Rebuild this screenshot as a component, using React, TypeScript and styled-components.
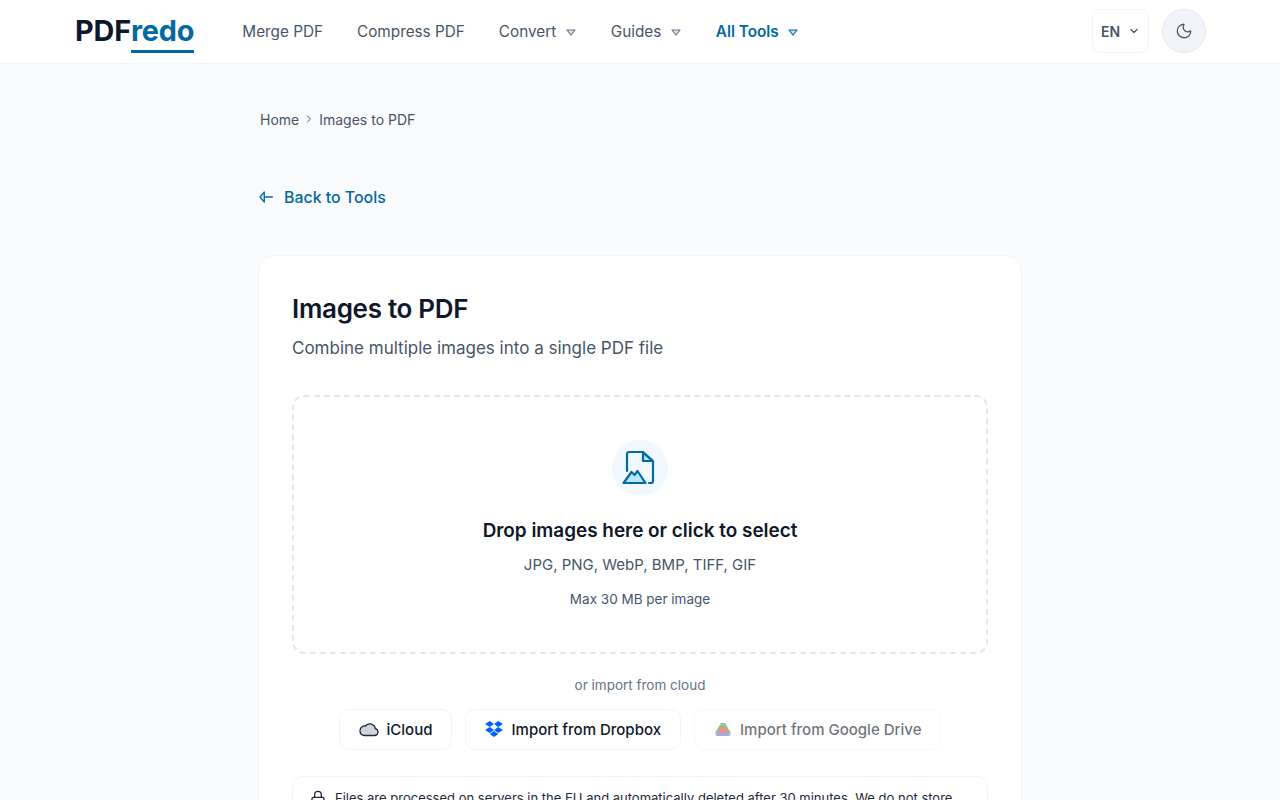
import React from "react";
import styled, { createGlobalStyle } from "styled-components";
import { ChevronDown, ChevronRight, Lock, Moon } from "lucide-react";

const GlobalStyle = createGlobalStyle`
  html, body {
    margin: 0;
    padding: 0;
    background: #fafbfd;
    font-family: Inter, "Liberation Sans", sans-serif;
    color: #0f172a;
  }
  * { box-sizing: border-box; }
  ::-webkit-scrollbar { display: none; }
`;

const Header = styled.header`
  height: 64px;
  background: #fff;
  border-bottom: 1px solid #f1f5f9;
  display: flex;
  align-items: center;
  padding: 0 74px 1px 75px;
`;

const Logo = styled.a`
  display: flex;
  font-size: 28.8px;
  font-weight: 700;
  line-height: 34px;
  letter-spacing: -0.15px;
  color: #0f172a;
  margin-right: 48px;
`;

const LogoAccent = styled.span`
  color: #0369a1;
  border-bottom: 3px solid #0369a1;
  height: 39px;
  margin-bottom: -5px;
  line-height: 34px;
`;

const Nav = styled.nav`
  display: flex;
  align-items: center;
  gap: 34px;
  flex: 1;
`;

const NavItem = styled.a<{ $active?: boolean }>`
  display: flex;
  align-items: center;
  gap: 8.5px;
  font-size: 15.3px;
  font-weight: ${(p) => (p.$active ? 600 : 400)};
  color: ${(p) => (p.$active ? "#0369a1" : "#475569")};
`;

const Caret = styled.svg<{ $active?: boolean }>`
  width: 12px;
  height: 7px;
  margin-top: 3px;
  fill: ${(p) => (p.$active ? "#bae6fd" : "#e2e8f0")};
  stroke: ${(p) => (p.$active ? "#0369a1" : "#64748b")};
  stroke-width: 1.2;
  stroke-linejoin: round;
`;

const Actions = styled.div`
  display: flex;
  align-items: center;
  gap: 13px;
`;

const LangButton = styled.button`
  width: 57px;
  height: 44px;
  display: flex;
  align-items: center;
  justify-content: center;
  gap: 8px;
  background: #fff;
  border: 1px solid #f1f5f9;
  border-radius: 8px;
  font: 600 14px Inter, sans-serif;
  color: #475569;
  padding: 0;
`;

const ThemeButton = styled.button`
  width: 44px;
  height: 44px;
  display: flex;
  align-items: center;
  justify-content: center;
  border-radius: 50%;
  border: 1px solid #e2e8f0;
  background: #f1f5f9;
  color: #475569;
  padding: 0;
`;

const Main = styled.main`
  width: 764px;
  margin: 0 auto;
  padding-top: 45px;
`;

const Breadcrumb = styled.div`
  display: flex;
  align-items: center;
  height: 20px;
  padding-left: 2px;
  font-size: 14px;
  color: #475569;
  gap: 4px;
  margin-bottom: 56px;
`;

const BackLink = styled.a`
  display: flex;
  align-items: center;
  gap: 10px;
  height: 24px;
  font-size: 15.9px;
  font-weight: 500;
  color: #0369a1;
  margin-bottom: 46px;
`;

const Card = styled.section`
  background: #fff;
  border: 1px solid #f1f5f9;
  border-radius: 16px;
  padding: 35px 33px;
`;

const Title = styled.h1`
  margin: 0;
  font-size: 26px;
  line-height: 36px;
  font-weight: 600;
  letter-spacing: -0.3px;
  color: #0f172a;
`;

const Subtitle = styled.p`
  margin: 8px 0 34px;
  font-size: 17px;
  line-height: 26px;
  color: #475569;
`;

const DropZone = styled.div`
  height: 259px;
  border: 2px dashed #e2e8f0;
  border-radius: 12px;
  display: flex;
  flex-direction: column;
  align-items: center;
  padding-top: 43px;
`;

const IconCircle = styled.div`
  width: 56px;
  height: 56px;
  border-radius: 50%;
  background: #f0f9ff;
  display: flex;
  align-items: center;
  justify-content: center;
  margin-bottom: 21px;
`;

const DropTitle = styled.div`
  font-size: 18.9px;
  line-height: 28px;
  font-weight: 600;
  color: #0f172a;
  margin-bottom: 8px;
`;

const Formats = styled.div`
  font-size: 15px;
  line-height: 24px;
  color: #475569;
  margin-bottom: 12px;
`;

const MaxSize = styled.div`
  font-size: 13.5px;
  line-height: 20px;
  color: #475569;
`;

const CloudLabel = styled.div`
  margin-top: 21px;
  text-align: center;
  font-size: 13.5px;
  line-height: 20px;
  color: #64748b;
`;

const CloudRow = styled.div`
  display: flex;
  justify-content: center;
  gap: 13px;
  margin-top: 14px;
`;

const CloudButton = styled.button<{ $disabled?: boolean }>`
  height: 41px;
  display: flex;
  align-items: center;
  gap: 8px;
  padding: 0 19px 1px;
  background: #fff;
  border: 1px solid #f1f5f9;
  border-radius: 10px;
  font: 500 15px Inter, sans-serif;
  color: #0f172a;
  opacity: ${(p) => (p.$disabled ? 0.6 : 1)};
`;

const Notice = styled.div`
  margin-top: 26px;
  padding: 11px 17px;
  display: flex;
  gap: 9px;
  border: 1px solid #f1f5f9;
  border-radius: 10px;
  font-size: 13px;
  line-height: 20px;
  color: #1e293b;
`;

const NoticeLock = styled(Lock)`
  flex-shrink: 0;
  margin-top: 2px;
`;

const DownCaret = ({ active }: { active?: boolean }) => (
  <Caret $active={active} viewBox="0 0 12 7">
    <path d="M2 1h8L6 6z" />
  </Caret>
);

const BackArrow = () => (
  <svg width="16" height="16" viewBox="0 0 16 16" fill="none" stroke="#0369a1" strokeWidth="1.3" strokeLinejoin="round" strokeLinecap="round">
    <path d="M6.300 3 2 8l4.300 5z" fill="#e0f2fe" />
    <path d="M6.300 8H14.500" />
  </svg>
);

const FileImageIcon = () => (
  <svg width="36" height="36" viewBox="0 0 36 36" fill="none" stroke="#0369a1" strokeWidth="2.2" strokeLinejoin="round" strokeLinecap="round">
    <path d="M5 21V4a2 2 0 0 1 2-2h14l10 9v20a2 2 0 0 1-2 2h-2" />
    <path d="M21 2.500V11h9.500z" fill="#bae6fd" />
    <path d="M1.500 33 9.500 22l3 3 3-4 8 12z" fill="#bae6fd" />
  </svg>
);

const CloudIcon = () => (
  <svg width="20" height="16" viewBox="0 0 20 16">
    <path
      d="M5 14.500h10.500a3.500 3.500 0 0 0 .8-6.900A5.500 5.500 0 0 0 6.500 5 4.700 4.700 0 0 0 1 9.500a5 5 0 0 0 4 5z"
      fill="#d1d5db"
      stroke="#1f2937"
      strokeWidth="1.3"
    />
  </svg>
);

const DropboxIcon = () => (
  <svg width="18" height="16" viewBox="0 0 20 18" fill="#0061ff">
    <path d="M5.200 0 0 3.400l5.200 3.300 4.800-3.300zM14.800 0 10 3.400l4.800 3.300L20 3.400zM0 10l5.200 3.400L10 10 5.200 6.700zM14.800 6.700 10 10l4.800 3.400L20 10zM5.200 14.600 10 18l4.800-3.400L10 11.200z" />
  </svg>
);

const DriveIcon = () => (
  <svg width="18" height="14" viewBox="0 0 18 14">
    <path d="M1 11 6 2.500h4L5 11z" fill="#34a853" />
    <path d="M6 1h5l6 10H12z" fill="#34a853" />
    <path d="M9 3.500 15.500 12h-13z" fill="#ea4335" />
    <path d="M1 11.500h16L15.500 14h-13z" fill="#4285f4" />
  </svg>
);

export default function App() {
  return (
    <>
      <GlobalStyle />
      <Header>
        <Logo>
          PDF<LogoAccent>redo</LogoAccent>
        </Logo>
        <Nav>
          <NavItem>Merge PDF</NavItem>
          <NavItem>Compress PDF</NavItem>
          <NavItem>
            Convert <DownCaret />
          </NavItem>
          <NavItem>
            Guides <DownCaret />
          </NavItem>
          <NavItem $active>
            All Tools <DownCaret active />
          </NavItem>
        </Nav>
        <Actions>
          <LangButton>
            EN <ChevronDown size={12} strokeWidth={2.5} />
          </LangButton>
          <ThemeButton aria-label="Toggle theme">
            <Moon size={18} strokeWidth={1.7} />
          </ThemeButton>
        </Actions>
      </Header>
      <Main>
        <Breadcrumb>
          <span>Home</span>
          <ChevronRight size={12} strokeWidth={2} />
          <span>Images to PDF</span>
        </Breadcrumb>
        <BackLink>
          <BackArrow />
          Back to Tools
        </BackLink>
        <Card>
          <Title>Images to PDF</Title>
          <Subtitle>Combine multiple images into a single PDF file</Subtitle>
          <DropZone>
            <IconCircle>
              <FileImageIcon />
            </IconCircle>
            <DropTitle>Drop images here or click to select</DropTitle>
            <Formats>JPG, PNG, WebP, BMP, TIFF, GIF</Formats>
            <MaxSize>Max 30 MB per image</MaxSize>
          </DropZone>
          <CloudLabel>or import from cloud</CloudLabel>
          <CloudRow>
            <CloudButton>
              <CloudIcon />
              iCloud
            </CloudButton>
            <CloudButton>
              <DropboxIcon />
              Import from Dropbox
            </CloudButton>
            <CloudButton $disabled>
              <DriveIcon />
              Import from Google Drive
            </CloudButton>
          </CloudRow>
          <Notice>
            <NoticeLock size={16} />
            <span>
              Files are processed on servers in the EU and automatically deleted after 30 minutes. We do not store
              your files.
            </span>
          </Notice>
        </Card>
      </Main>
    </>
  );
}
